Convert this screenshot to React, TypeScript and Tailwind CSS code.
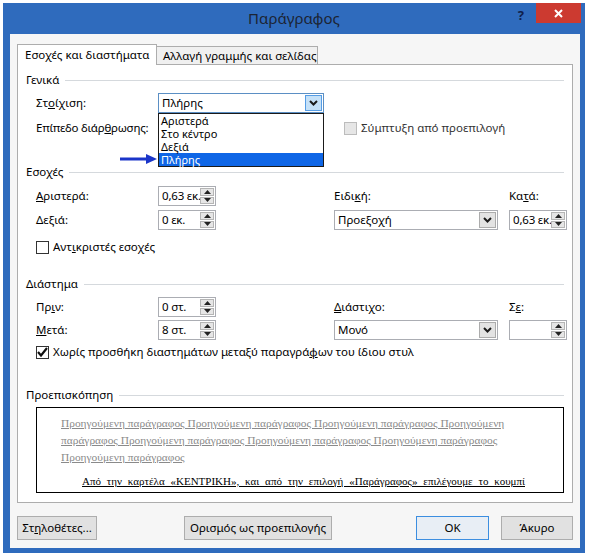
import type { ReactNode } from 'react';

const FONT = { fontFamily: '"Noto Sans", "DejaVu Sans", sans-serif' };

function Tri({ up }: { up?: boolean }) {
  return (
    <svg width="7" height="4" viewBox="0 0 7 4">
      <path d={up ? 'M0 4 L3.5 0 L7 4 Z' : 'M0 0 L3.5 4 L7 0 Z'} fill="#222" />
    </svg>
  );
}

function Chevron() {
  return (
    <svg width="9" height="6" viewBox="0 0 9 6">
      <path d="M1 1 L4.5 4.5 L8 1" fill="none" stroke="#1b1b1b" strokeWidth="2" />
    </svg>
  );
}

function Spin({ value }: { value: string }) {
  return (
    <div className="flex h-[20px] w-[58px] border border-[#abadb3] bg-white">
      <div className="flex-1 overflow-hidden whitespace-nowrap pl-[3px] leading-[18px] tracking-[-0.2px]">{value}</div>
      <div className="flex w-[15px] flex-col gap-px py-px pr-px">
        <div className="flex flex-1 items-center justify-center border border-[#b5b5b5] bg-[#e6e6e6]">
          <Tri up />
        </div>
        <div className="flex flex-1 items-center justify-center border border-[#b5b5b5] bg-[#e6e6e6]">
          <Tri />
        </div>
      </div>
    </div>
  );
}

function Select({ value, width, active }: { value: string; width: string; active?: boolean }) {
  return (
    <div className={`flex h-[20px] ${width} border bg-white ${active ? 'border-[#5b8fc4]' : 'border-[#abadb3]'}`}>
      <div className="flex-1 whitespace-nowrap pl-[3px] leading-[18px]">{value}</div>
      <div
        className={`m-px flex w-[17px] items-center justify-center border ${
          active ? 'border-[#569de5] bg-[#c5e1f8]' : 'border-[#acacac] bg-[#e3e3e3]'
        }`}
      >
        <Chevron />
      </div>
    </div>
  );
}

function Check({ checked, disabled }: { checked?: boolean; disabled?: boolean }) {
  return (
    <div
      className={`flex h-[13px] w-[13px] shrink-0 items-center justify-center border ${
        disabled ? 'border-[#bcbcbc] bg-[#e6e6e6]' : 'border-[#333] bg-white'
      }`}
    >
      {checked && (
        <svg width="11" height="10" viewBox="0 0 11 10">
          <path d="M1 5 L4 8.5 L10 1" fill="none" stroke="#111" strokeWidth="2.2" />
        </svg>
      )}
    </div>
  );
}

function Group({ title, className }: { title: string; className: string }) {
  return (
    <div className={`flex h-[14px] items-center gap-[6px] px-2 ${className}`}>
      <span className="whitespace-nowrap leading-[14px]">{title}</span>
      <div className="h-px flex-1 bg-[#d5d9dd]" />
    </div>
  );
}

function Row({
  className,
  label,
  control,
  third,
  fourth,
}: {
  className: string;
  label?: ReactNode;
  control?: ReactNode;
  third?: ReactNode;
  fourth?: ReactNode;
}) {
  return (
    <div className={`flex h-[20px] items-center whitespace-nowrap pl-[18px] ${className}`}>
      <div className="w-[122px]">{label}</div>
      <div className="w-[176px]">{control}</div>
      <div className="w-[175px]">{third}</div>
      <div>{fourth}</div>
    </div>
  );
}

function Btn({ children, width, primary }: { children: ReactNode; width: string; primary?: boolean }) {
  return (
    <div
      className={`flex h-[24px] ${width} items-center justify-center whitespace-nowrap border ${
        primary ? 'border-[#3c8ee0] bg-[#e8eef5]' : 'border-[#adadad] bg-[#e1e1e1]'
      }`}
    >
      {children}
    </div>
  );
}

export default function App() {
  return (
    <div className="relative h-[553px] w-[589px] overflow-hidden bg-white text-[11.5px] text-black" style={FONT}>
      <div className="ml-[3px] mt-[3px] flex h-[550px] w-[582px] flex-col bg-[#2f6bbd]">
        <div className="relative flex h-[31px] items-center justify-center">
          <span className="text-[15px] text-[#1c2433]">Παράγραφος</span>
          <div className="absolute right-[4px] top-0 flex items-start gap-[12px]">
            <span className="mt-[3px] text-[13px] font-bold text-[#10204a]">?</span>
            <div className="flex h-[20px] w-[45px] items-center justify-center bg-[#cc3a30]">
              <svg width="9" height="9" viewBox="0 0 9 9">
                <path d="M1 1 L8 8 M8 1 L1 8" stroke="#fff" strokeWidth="2" />
              </svg>
            </div>
          </div>
        </div>

        <div className="ml-[7px] mr-[5px] flex h-[514px] flex-col bg-[#f6f6f6] px-[7px]">
          <div className="mt-[10px] flex h-[20px] items-end whitespace-nowrap">
            <div className="relative z-10 -mb-px flex h-[21px] w-[140px] items-center border border-b-0 border-[#adadad] bg-white pl-[7px]">
              Εσοχές και διαστήματα
            </div>
            <div className="flex h-[18px] w-[161px] items-center border border-b-0 border-l-0 border-[#adadad] bg-[#f0f0f0] pl-[6px]">
              Αλλαγή γραμμής και σελίδας
            </div>
          </div>

          <div className="relative flex h-[439px] flex-col border border-[#adadad] bg-white">
            <Group title="Γενικά" className="mt-[8px]" />
            <Row
              className="mt-[6px]"
              label={
                <span>
                  Στ<u>ο</u>ίχιση:
                </span>
              }
              control={
                <div className="relative">
                  <Select value="Πλήρης" width="w-[166px]" active />
                  <div className="absolute left-0 top-[20px] z-20 w-[166px] border border-[#1a1a1a] bg-white text-[11px] leading-[13px]">
                    <div className="h-[13px] pl-[2px]">Αριστερά</div>
                    <div className="h-[13px] pl-[2px]">Στο κέντρο</div>
                    <div className="h-[13px] pl-[2px]">Δεξιά</div>
                    <div className="h-[13px] bg-[#0f66e6] pl-[2px] text-white">Πλήρης</div>
                  </div>
                </div>
              }
            />
            <Row
              className="mt-[5px]"
              label={
                <span className="tracking-[-0.25px]">
                  Επίπεδο διάρ<u>θ</u>ρωσης:
                </span>
              }
              control={<Select value="" width="w-[166px]" />}
              third={
                <div className="-ml-[166px] flex items-center gap-[4px] pl-[176px] text-[#333]">
                  <Check disabled />
                  <span>Σύμπτυξη από προεπιλογή</span>
                </div>
              }
            />

            <svg className="absolute left-[102px] top-[88px] z-30" width="38" height="12" viewBox="0 0 38 12">
              <path d="M0 6 H28" stroke="#1a35c9" strokeWidth="3" />
              <path d="M26 1 L37 6 L26 11 Z" fill="#1a35c9" />
            </svg>

            <Group title="Εσοχές" className="mt-[27px]" />
            <Row
              className="mt-[7px]"
              label={
                <span>
                  <u>Α</u>ριστερά:
                </span>
              }
              control={<Spin value="0,63 εκ." />}
              third={
                <span>
                  Ειδι<u>κ</u>ή:
                </span>
              }
              fourth={
                <span>
                  Κα<u>τ</u>ά:
                </span>
              }
            />
            <Row
              className="mt-[4px]"
              label="Δεξιά:"
              control={<Spin value="0 εκ." />}
              third={<Select value="Προεξοχή" width="w-[164px]" />}
              fourth={<Spin value="0,63 εκ." />}
            />
            <div className="mt-[10px] flex h-[14px] items-center gap-[4px] whitespace-nowrap pl-[18px]">
              <Check />
              <span>
                Αντ<u>ι</u>κριστές εσοχές
              </span>
            </div>

            <Group title="Διάστημα" className="mt-[23px]" />
            <Row
              className="mt-[6px]"
              label={
                <span>
                  Πρ<u>ι</u>ν:
                </span>
              }
              control={<Spin value="0 στ." />}
              third={
                <span>
                  <u>Δ</u>ιάστιχο:
                </span>
              }
              fourth={
                <span>
                  Σ<u>ε</u>:
                </span>
              }
            />
            <Row
              className="mt-[3px]"
              label={
                <span>
                  <u>Μ</u>ετά:
                </span>
              }
              control={<Spin value="8 στ." />}
              third={<Select value="Μονό" width="w-[164px]" />}
              fourth={<Spin value="" />}
            />
            <div className="mt-[5px] flex h-[14px] items-center gap-[4px] whitespace-nowrap pl-[18px]">
              <Check checked />
              <span>
                Χωρίς προσθήκη διαστημάτων μεταξύ παραγρά<u>φ</u>ων του ίδιου στυλ
              </span>
            </div>

            <Group title="Προεπισκόπηση" className="mt-[29px]" />
            <div
              className="ml-[18px] mr-[8px] mt-[5px] h-[86px] overflow-hidden border border-black bg-white pl-[24px] pr-[38px] pt-[7px] text-[11px] leading-[17px]"
              style={{ fontFamily: '"Liberation Serif", "DejaVu Serif", serif' }}
            >
              <div className="whitespace-nowrap text-[11.4px] text-[#8a8a8a] underline">
                Προηγούμενη παράγραφος Προηγούμενη παράγραφος Προηγούμενη παράγραφος Προηγούμενη
              </div>
              <div className="whitespace-nowrap text-[11.4px] text-[#8a8a8a] underline">
                παράγραφος Προηγούμενη παράγραφος Προηγούμενη παράγραφος Προηγούμενη παράγραφος
              </div>
              <div className="whitespace-nowrap text-[11.4px] text-[#8a8a8a] underline">Προηγούμενη παράγραφος</div>
              <div className="mt-[7px] pl-[21px] underline [text-align-last:justify]">
                Από την καρτέλα «ΚΕΝΤΡΙΚΗ», και από την επιλογή «Παράγραφος» επιλέγουμε το κουμπί
              </div>
              <div className="underline">
                στοίχισης που θέλουμε, για να στοιχίσουμε το κείμενο της παραγράφου.
              </div>
            </div>
          </div>

          <div className="mt-[13px] flex h-[24px] items-center">
            <Btn width="w-[80px]">
              <span>
                Στ<u>η</u>λοθέτες...
              </span>
            </Btn>
            <div className="ml-[87px]">
              <Btn width="w-[148px]">Ορισμός ως προεπιλογής</Btn>
            </div>
            <div className="ml-[84px]">
              <Btn width="w-[73px]" primary>
                OK
              </Btn>
            </div>
            <div className="ml-[12px]">
              <Btn width="w-[72px]">Άκυρο</Btn>
            </div>
          </div>
        </div>
      </div>
    </div>
  );
}
